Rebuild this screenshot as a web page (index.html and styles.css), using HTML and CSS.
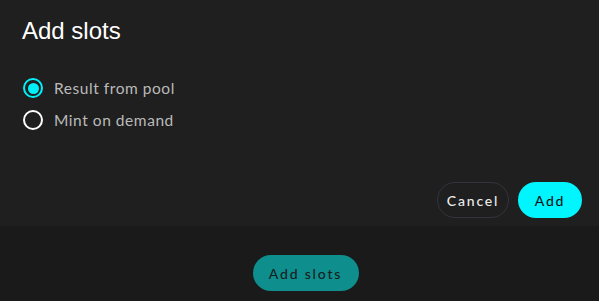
FILE: index.html
```html
<!DOCTYPE html>
<html>
<head>
<meta charset="utf-8">
<link rel="stylesheet" href="styles.css">
</head>
<body>
<div class="page">
  <div class="dialog">
    <h1 class="title">Add slots</h1>
    <div class="options">
      <label class="option">
        <span class="radio checked"><span class="dot"></span></span>
        <span class="label">Result from pool</span>
      </label>
      <label class="option">
        <span class="radio"></span>
        <span class="label">Mint on demand</span>
      </label>
    </div>
    <div class="actions">
      <button class="btn cancel">Cancel</button>
      <button class="btn add">Add</button>
    </div>
  </div>
  <div class="behind">
    <button class="btn behind-btn">Add slots</button>
  </div>
</div>
</body>
</html>
```
FILE: styles.css
```css
html, body {
  margin: 0;
  padding: 0;
  background: #1a1a1a;
  width: 599px;
  height: 301px;
  overflow: hidden;
}
.page {
  display: flex;
  flex-direction: column;
  height: 301px;
}
.dialog {
  background: #1f1f1f;
  height: 226px;
  box-sizing: border-box;
  padding: 17px 17px 0 22px;
  display: flex;
  flex-direction: column;
}
.title {
  margin: 0;
  font-family: "Liberation Sans", Arial, sans-serif;
  font-weight: 400;
  font-size: 24px;
  line-height: 28px;
  color: #ffffff;
}
.options {
  margin-top: 33px;
  display: flex;
  flex-direction: column;
  gap: 12px;
}
.option {
  display: flex;
  align-items: center;
  gap: 11px;
  height: 20px;
  padding-left: 1px;
}
.radio {
  width: 20px;
  height: 20px;
  box-sizing: border-box;
  border: 2px solid #ffffff;
  border-radius: 50%;
  display: flex;
  align-items: center;
  justify-content: center;
}
.radio.checked {
  border-color: #00f0f8;
}
.dot {
  width: 11px;
  height: 11px;
  border-radius: 50%;
  background: #00f0f8;
}
.label {
  font-family: "Lato", sans-serif;
  font-size: 15.5px;
  letter-spacing: 0.55px;
  color: #bababa;
}
.actions {
  margin-top: auto;
  margin-bottom: 8px;
  display: flex;
  justify-content: flex-end;
  gap: 9px;
}
.btn {
  font-family: "Lato", sans-serif;
  font-size: 14px;
  font-weight: 500;
  letter-spacing: 1.8px;
  height: 36px;
  border-radius: 18px;
  border: none;
  padding: 0;
  cursor: pointer;
}
.cancel {
  width: 72px;
  background: transparent;
  border: 1px solid #34343e;
  color: #ececec;
}
.add {
  width: 64px;
  background: #00f5ff;
  color: #111111;
}
.behind {
  flex: 1;
  display: flex;
  justify-content: center;
  padding-top: 29px;
  padding-left: 12px;
}
.behind-btn {
  width: 106px;
  background: #0e8e8c;
  color: #16211f;
}
```
